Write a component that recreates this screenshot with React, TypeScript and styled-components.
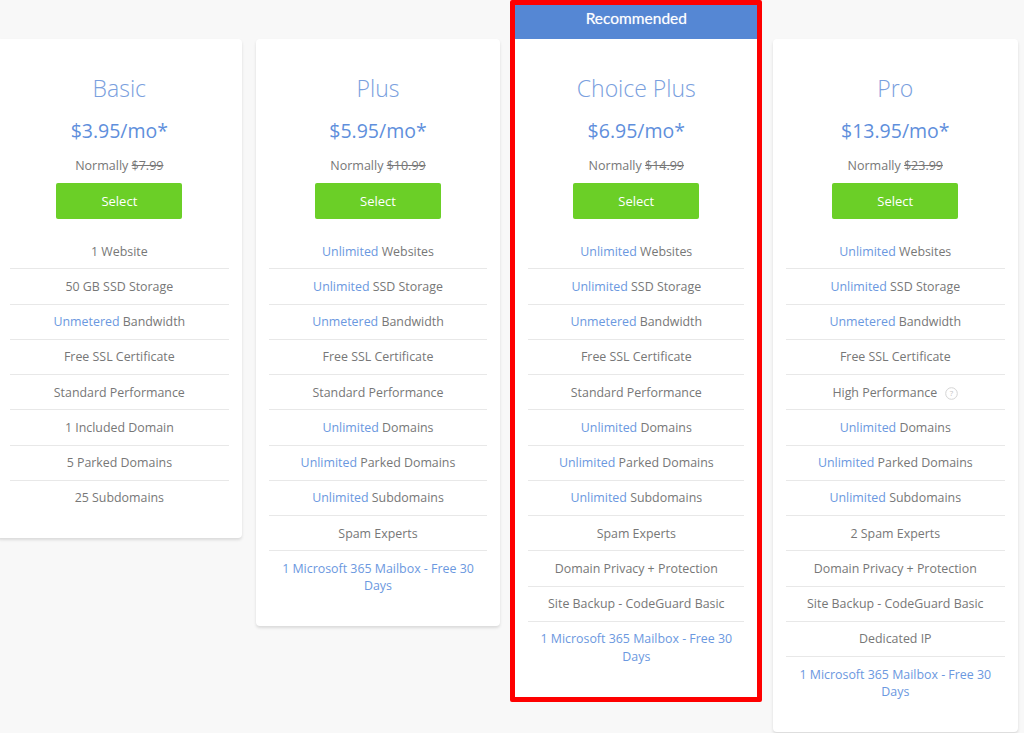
import * as React from "react";
import styled, { createGlobalStyle } from "styled-components";

const GlobalStyle = createGlobalStyle`
  html, body {
    margin: 0;
    padding: 0;
    height: 733px;
    overflow: hidden;
    background: #f8f8f8;
    font-family: "Open Sans", "Liberation Sans", sans-serif;
  }
`;

const Plans = styled.div`
  display: grid;
  grid-template-columns: repeat(4, 244.67px);
  column-gap: 14px;
  align-items: start;
  margin-left: -3px;
  padding-top: 39px;
`;

const Card = styled.div`
  background: #fff;
  border-radius: 4px;
  box-shadow: 0 2px 3px rgba(0, 0, 0, 0.12);
  padding: 0 13px 23px;
  text-align: center;
`;

const Highlight = styled.div`
  margin: -39px -3.33px 0 -4px;
  border: 5px solid #fe0000;
  border-radius: 2px;
  background: #fff;

  ${Card} {
    padding-bottom: 24px;
    box-shadow: none;
    border-radius: 0;
  }
`;

const Ribbon = styled.div`
  height: 34px;
  background: #5587d4;
  color: #fff;
  font-family: Lato, "Open Sans", sans-serif;
  font-size: 15.5px;
  font-weight: 400;
  line-height: 27px;
  text-align: center;
  text-shadow: 0 0 1px rgba(255, 255, 255, 0.5);
`;

const Name = styled.h2`
  margin: 0;
  padding-top: 31.5px;
  color: #7aa0de;
  font-size: 23px;
  font-weight: 300;
  line-height: 34px;
`;

const Price = styled.div`
  margin-top: 12.5px;
  color: #5f8fdc;
  font-size: 19.5px;
  line-height: 28px;
`;

const Normally = styled.div`
  margin-top: 11.5px;
  color: #777;
  font-size: 12.5px;
  line-height: 18px;
`;

const SelectButton = styled.button`
  display: block;
  width: 126px;
  height: 36px;
  margin: 8.5px auto 15px;
  padding: 0;
  border: 0;
  border-radius: 2px;
  background: #6bcf27;
  color: #fff;
  font-family: inherit;
  font-size: 13px;
  font-weight: 500;
`;

const Features = styled.ul`
  margin: 0;
  padding: 0;
  list-style: none;
`;

const Feature = styled.li`
  padding: 8.5px 0;
  border-top: 1px solid #e8e8e8;
  color: #777;
  font-size: 12.4px;
  line-height: 17.25px;

  &:first-child {
    border-top: 0;
  }
`;

const Accent = styled.span`
  color: #6b98e0;
`;

const HelpIcon = styled.svg`
  width: 13px;
  height: 13px;
  margin-left: 8px;
  vertical-align: -3px;
`;

type Plan = {
  name: string;
  price: string;
  normally: string;
  features: React.ReactNode[];
};

const unlimited = (label: string) => (
  <>
    <Accent>Unlimited</Accent> {label}
  </>
);
const unmetered = (
  <>
    <Accent>Unmetered</Accent> Bandwidth
  </>
);
const mailbox = <Accent>1 Microsoft 365 Mailbox - Free 30 Days</Accent>;

const plans: Plan[] = [
  {
    name: "Basic",
    price: "$3.95/mo*",
    normally: "$7.99",
    features: [
      "1 Website",
      "50 GB SSD Storage",
      unmetered,
      "Free SSL Certificate",
      "Standard Performance",
      "1 Included Domain",
      "5 Parked Domains",
      "25 Subdomains",
    ],
  },
  {
    name: "Plus",
    price: "$5.95/mo*",
    normally: "$10.99",
    features: [
      unlimited("Websites"),
      unlimited("SSD Storage"),
      unmetered,
      "Free SSL Certificate",
      "Standard Performance",
      unlimited("Domains"),
      unlimited("Parked Domains"),
      unlimited("Subdomains"),
      "Spam Experts",
      mailbox,
    ],
  },
  {
    name: "Choice Plus",
    price: "$6.95/mo*",
    normally: "$14.99",
    features: [
      unlimited("Websites"),
      unlimited("SSD Storage"),
      unmetered,
      "Free SSL Certificate",
      "Standard Performance",
      unlimited("Domains"),
      unlimited("Parked Domains"),
      unlimited("Subdomains"),
      "Spam Experts",
      "Domain Privacy + Protection",
      "Site Backup - CodeGuard Basic",
      mailbox,
    ],
  },
  {
    name: "Pro",
    price: "$13.95/mo*",
    normally: "$23.99",
    features: [
      unlimited("Websites"),
      unlimited("SSD Storage"),
      unmetered,
      "Free SSL Certificate",
      <>
        High Performance
        <HelpIcon viewBox="0 0 13 13">
          <circle cx="6.5" cy="6.5" r="5.8" fill="none" stroke="#d4d4d4" />
          <text x="6.5" y="9.4" fontSize="8" textAnchor="middle" fill="#c4c4c4" fontFamily="Open Sans">
            ?
          </text>
        </HelpIcon>
      </>,
      unlimited("Domains"),
      unlimited("Parked Domains"),
      unlimited("Subdomains"),
      "2 Spam Experts",
      "Domain Privacy + Protection",
      "Site Backup - CodeGuard Basic",
      "Dedicated IP",
      mailbox,
    ],
  },
];

const PlanCard = ({ plan }: { plan: Plan }) => (
  <Card>
    <Name>{plan.name}</Name>
    <Price>{plan.price}</Price>
    <Normally>
      Normally <s>{plan.normally}</s>
    </Normally>
    <SelectButton>Select</SelectButton>
    <Features>
      {plan.features.map((feature, i) => (
        <Feature key={i}>{feature}</Feature>
      ))}
    </Features>
  </Card>
);

export default function App() {
  return (
    <>
      <GlobalStyle />
      <Plans>
        {plans.map((plan) =>
          plan.name === "Choice Plus" ? (
            <Highlight key={plan.name}>
              <Ribbon>Recommended</Ribbon>
              <PlanCard plan={plan} />
            </Highlight>
          ) : (
            <PlanCard key={plan.name} plan={plan} />
          ),
        )}
      </Plans>
    </>
  );
}
